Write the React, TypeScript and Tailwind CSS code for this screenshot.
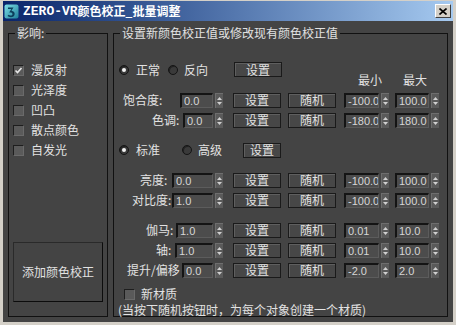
const cjk = "font-['Noto_Sans_CJK_SC',sans-serif]";

function Arrows() {
  return (
    <div className="w-[8px] bg-[#5a5a5a] border-t border-l border-t-[#6e6e6e] border-l-[#6e6e6e] flex flex-col items-center justify-center gap-[2px]">
      <svg width="5" height="3" viewBox="0 0 5 3">
        <path d="M2.5 0L5 3H0z" fill="#d0d0d0" />
      </svg>
      <svg width="5" height="3" viewBox="0 0 5 3">
        <path d="M0 0h5L2.5 3z" fill="#d0d0d0" />
      </svg>
    </div>
  );
}

function Spinner({ value, field }: { value: string; field: string }) {
  return (
    <div className="flex h-[15px] gap-[2px]">
      <div
        className={`${field} bg-[#4c4c4c] border-t-2 border-l-2 border-t-[#141414] border-l-[#141414] border-b border-r border-b-[#5c5c5c] border-r-[#5c5c5c] overflow-hidden whitespace-nowrap pl-[2px] text-[11px] leading-[12px] text-[#d6d6d6] font-['Liberation_Sans',sans-serif]`}
      >
        {value}
      </div>
      <Arrows />
    </div>
  );
}

function Btn({ label, className }: { label: string; className: string }) {
  return (
    <div
      className={`${className} h-[15px] bg-[#474747] border border-[#1a1a1a] shadow-[inset_1px_1px_0_#5f5f5f] flex items-center justify-center text-[12px] leading-none text-[#e2e2e2]`}
    >
      {label}
    </div>
  );
}

function Radio({ on }: { on?: boolean }) {
  return (
    <div className="w-[10px] h-[10px] rounded-full bg-[#3a3a3a] border border-[#141414] shadow-[inset_1px_1px_0_#222] flex items-center justify-center">
      {on && <div className="w-[4px] h-[4px] rounded-full bg-[#f2f2f2]" />}
    </div>
  );
}

function Check({ on }: { on?: boolean }) {
  return (
    <div className="w-[11px] h-[11px] bg-[#5a5a5a] border-t border-l border-t-[#1e1e1e] border-l-[#1e1e1e] border-b border-r border-b-[#6a6a6a] border-r-[#6a6a6a] flex items-center justify-center">
      {on && (
        <svg width="9" height="9" viewBox="0 0 9 9">
          <path d="M1.5 4.5L3.5 6.5L7.5 2" stroke="#e8e8e8" strokeWidth="1.6" fill="none" />
        </svg>
      )}
    </div>
  );
}

type Row = {
  label: string;
  lw: string;
  pl: string;
  fw: string;
  v: string;
  min: string;
  max: string;
};

const rowsA: Row[] = [
  { label: "饱合度:", lw: "w-[66px]", pl: "pl-[9px]", fw: "w-[33px]", v: "0.0", min: "-100.0", max: "100.0" },
  { label: "色调:", lw: "w-[69px]", pl: "pl-[38px]", fw: "w-[30px]", v: "0.0", min: "-180.0", max: "180.0" },
];
const rowsB: Row[] = [
  { label: "亮度:", lw: "w-[58px]", pl: "pl-[26px]", fw: "w-[41px]", v: "0.0", min: "-100.0", max: "100.0" },
  { label: "对比度:", lw: "w-[58px]", pl: "pl-[18px]", fw: "w-[41px]", v: "1.0", min: "-100.0", max: "100.0" },
];
const rowsC: Row[] = [
  { label: "伽马:", lw: "w-[62px]", pl: "pl-[32px]", fw: "w-[37px]", v: "1.0", min: "0.01", max: "10.0" },
  { label: "轴:", lw: "w-[61px]", pl: "pl-[42px]", fw: "w-[38px]", v: "1.0", min: "0.01", max: "10.0" },
  { label: "提升/偏移", lw: "w-[68px]", pl: "pl-[13px]", fw: "w-[31px]", v: "0.0", min: "-2.0", max: "2.0" },
];

function SpinRow({ r }: { r: Row }) {
  return (
    <div className="flex items-center h-[20px]">
      <div className={`${r.lw} ${r.pl} whitespace-nowrap text-[12px] leading-none text-[#e2e2e2]`}>{r.label}</div>
      <Spinner value={r.v} field={r.fw} />
      <Btn label="设置" className="ml-[10px] w-[48px]" />
      <Btn label="随机" className="ml-[7px] w-[48px]" />
      <div className="ml-[8px]">
        <Spinner value={r.min} field="w-[35px]" />
      </div>
      <div className="ml-[6px]">
        <Spinner value={r.max} field="w-[34px]" />
      </div>
    </div>
  );
}

function TitleIcon() {
  return (
    <svg width="15" height="15" viewBox="0 0 15 15">
      <defs>
        <linearGradient id="ti" x1="0" y1="0" x2="1" y2="1">
          <stop offset="0" stopColor="#7fe0e8" />
          <stop offset="1" stopColor="#1e7f9a" />
        </linearGradient>
      </defs>
      <rect x="0.5" y="0.5" width="14" height="14" rx="2" fill="url(#ti)" />
      <path d="M4 3.5h5.5l-2 3.2c2 .3 3.2 1.6 3.2 3.2 0 2-1.8 3.3-4 3.3-1.3 0-2.4-.4-3.2-1.1l1-1.3c.6.5 1.300.8 2.1.8 1.1 0 1.9-.6 1.9-1.6s-.9-1.6-2.2-1.6H5.2l2.1-3.3H4z" fill="#0d3f5c" />
    </svg>
  );
}

export default function App() {
  return (
    <div className={`w-[456px] h-[325px] bg-[#d4d0c8] pt-[1px] px-[3px] pb-[3px] flex flex-col ${cjk}`}>
      <div className="h-[20px] flex items-center bg-gradient-to-r from-[#0a246a] to-[#a6caf0] pl-[1px] pr-[2px]">
        <TitleIcon />
        <div className="ml-[4px] flex items-center text-white font-bold whitespace-nowrap">
          <span className="font-['Liberation_Mono',monospace] text-[13px] leading-none">ZERO-VR</span>
          <span className="text-[12px] leading-none">颜色校正_批量调整</span>
        </div>
        <div className="ml-auto w-[16px] h-[14px] bg-[#d4d0c8] border border-t-white border-l-white border-b-[#404040] border-r-[#404040] flex items-center justify-center">
          <svg width="8" height="7" viewBox="0 0 8 7">
            <path d="M0.5 0.5L7.5 6.5M7.5 0.5L0.5 6.5" stroke="#000" strokeWidth="1.6" />
          </svg>
        </div>
      </div>

      <div className="h-[301px] bg-[#444444] flex pl-[5px] pr-[5px] pt-[12px] gap-[5px] text-[#e2e2e2]">
        {/* left group */}
        <div className="relative w-[100px] h-[284px] border border-[#111] flex flex-col">
          <span className="absolute top-[-7px] left-[6px] px-[2px] bg-[#444444] text-[12px] leading-[12px]">影响:</span>
          <div className="pt-[26px] flex flex-col">
            {[
              { t: "漫反射", on: true },
              { t: "光泽度" },
              { t: "凹凸" },
              { t: "散点颜色" },
              { t: "自发光" },
            ].map((c) => (
              <div key={c.t} className="h-[20px] flex items-center pl-[4px] gap-[7px]">
                <Check on={c.on} />
                <span className="text-[12px] leading-none">{c.t}</span>
              </div>
            ))}
          </div>
          <div className="mt-[82px] ml-[4px] w-[90px] h-[60px] border border-t-[#2a2a2a] border-l-[#2a2a2a] border-b-[#0c0c0c] border-r-[#0c0c0c] flex items-center justify-center text-[12px]">
            添加颜色校正
          </div>
        </div>

        {/* right group */}
        <div className="relative flex-1 h-[284px] border border-[#111] flex flex-col pt-[28px]">
          <span className="absolute top-[-7px] left-[6px] px-[2px] bg-[#444444] text-[12px] leading-[12px] whitespace-nowrap">
            设置新颜色校正值或修改现有颜色校正值
          </span>

          <div className="h-[28px] flex items-start">
            <div className="h-[16px] flex items-center pl-[5px]">
              <Radio on />
              <span className="ml-[7px] text-[12px] leading-none">正常</span>
              <div className="ml-[8px]">
                <Radio />
              </div>
              <span className="ml-[6px] text-[12px] leading-none">反向</span>
            </div>
            <Btn label="设置" className="ml-[26px] w-[48px]" />
            <span className="ml-[76px] mt-[12px] text-[12px] leading-[12px]">最小</span>
            <span className="ml-[21px] mt-[12px] text-[12px] leading-[12px]">最大</span>
          </div>

          {rowsA.map((r) => (
            <SpinRow key={r.label} r={r} />
          ))}

          <div className="mt-[10px] h-[20px] flex items-center pl-[5px]">
            <Radio on />
            <span className="ml-[7px] text-[12px] leading-none">标准</span>
            <div className="ml-[22px]">
              <Radio />
            </div>
            <span className="ml-[6px] text-[12px] leading-none">高级</span>
            <Btn label="设置" className="ml-[21px] w-[38px]" />
          </div>

          <div className="mt-[10px]">
            {rowsB.map((r) => (
              <SpinRow key={r.label} r={r} />
            ))}
          </div>

          <div className="mt-[10px]">
            {rowsC.map((r) => (
              <SpinRow key={r.label} r={r} />
            ))}
          </div>

          <div className="mt-[7px] h-[14px] flex items-center pl-[10px] gap-[6px]">
            <Check />
            <span className="text-[12px] leading-none">新材质</span>
          </div>
          <div className="mt-[2px] h-[13px] pl-[4px] flex items-center text-[12px] leading-none whitespace-nowrap">
            (当按下随机按钮时，为每个对象创建一个材质)
          </div>
        </div>
      </div>
    </div>
  );
}
